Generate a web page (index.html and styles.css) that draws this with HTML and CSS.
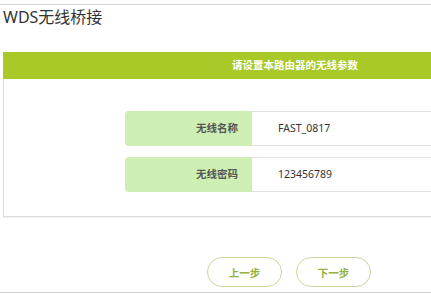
FILE: index.html
```html
<!DOCTYPE html>
<html>

<head>
    <title>WDS无线桥接</title>
    <link rel="stylesheet" href="styles.css">
</head>

<body>
    <div class="page">
        <div class="page-rule"></div>
        <div class="page-title">WDS无线桥接</div>

        <div class="panel">
            <div class="panel-header">请设置本路由器的无线参数</div>
            <div class="panel-body">
                <div class="panel-row">
                    <div class="panel-row-label">无线名称</div>
                    <div class="panel-row-value">FAST_0817</div>
                </div>
                <div class="panel-row">
                    <div class="panel-row-label">无线密码</div>
                    <div class="panel-row-value">123456789</div>
                </div>
            </div>
        </div>

        <div class="page-buttons">
            <button class="page-buttons-button">上一步</button>
            <button class="page-buttons-button">下一步</button>
        </div>
        <div class="page-rule page-rule-bottom"></div>
    </div>
</body>

</html>
```

FILE: styles.css
```css
html,
body {
    margin: 0;
    overflow: hidden;
    background: #fff;
    font-family: "Noto Sans", "Noto Sans CJK SC", sans-serif;
}

.page {
    width: 431px;
    height: 298px;
    overflow: hidden;
    padding-top: 4px;
    box-sizing: border-box;
}

.page-rule {
    height: 1px;
    background: #d4d4d4;
}

.page-title {
    padding: 2px 0 0 3px;
    font-size: 16px;
    line-height: 20px;
    color: #333;
}

.panel {
    margin: 25px 0 0 3px;
    width: 600px;
    border: 1px solid #dcdcdc;
    border-top: none;
    box-shadow: 0 1px 0 #f0f0f0;
}

.panel-header {
    height: 27px;
    line-height: 27px;
    margin-left: -1px;
    padding-left: 229px;
    background: #a8c927;
    color: #fff;
    font-size: 10.5px;
    font-weight: bold;
}

.panel-body {
    display: flex;
    flex-direction: column;
    gap: 11px;
    padding: 32px 0 24px 121px;
}

.panel-row {
    display: flex;
    height: 35px;
}

.panel-row-label {
    width: 113px;
    padding-right: 14px;
    text-align: right;
    line-height: 35px;
    background: #cdefb3;
    border-radius: 4px 0 0 4px;
    font-size: 10.5px;
    font-weight: bold;
    color: #555;
}

.panel-row-value {
    flex: 1;
    padding-left: 26px;
    line-height: 33px;
    border-top: 1px solid #e0e0e0;
    border-bottom: 1px solid #e0e0e0;
    font-size: 10.5px;
    color: #333;
}

.page-buttons {
    display: flex;
    gap: 14px;
    padding: 40px 0 0 207px;
    height: 35px;
}

.page-buttons-button {
    width: 75px;
    height: 30px;
    border: 1px solid #cbd49c;
    border-radius: 15px;
    background: #fff;
    color: #93b23f;
    font-family: "Noto Sans", "Noto Sans CJK SC", sans-serif;
    font-size: 10.5px;
    font-weight: bold;
    padding: 0;
}

.page-rule-bottom {
    background: #d0d0d0;
}
```
